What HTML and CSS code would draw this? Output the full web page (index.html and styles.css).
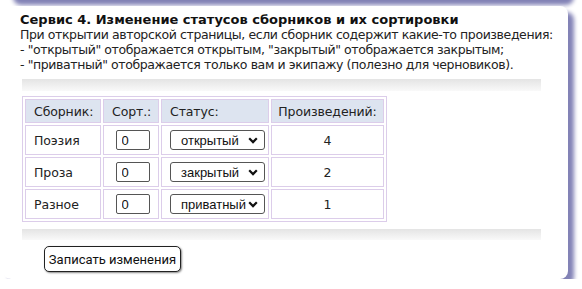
FILE: index.html
```html
<!DOCTYPE html>
<html lang="ru">
<head>
  <meta charset="UTF-8" />
  <title>Сервис 4</title>
  <link rel="stylesheet" href="styles.css">
</head>
<body>
  <div class="page">
    <div class="panel panel-prev"></div>

    <div class="panel">
      <div class="service-title">Сервис 4. Изменение статусов сборников и их сортировки</div>
      <div class="service-text">
        При открытии авторской страницы, если сборник содержит какие-то произведения:<br>
        - "открытый" отображается открытым, "закрытый" отображается закрытым;<br>
        - "приватный" отображается только вам и экипажу (полезно для черновиков).
      </div>

      <div class="shade-bar"></div>

      <table class="books-table">
        <tr>
          <th class="col-name">Сборник:</th>
          <th class="col-sort">Сорт.:</th>
          <th class="col-status">Статус:</th>
          <th class="col-count">Произведений:</th>
        </tr>
        <tr>
          <td>Поэзия</td>
          <td class="center"><input class="sort-input" type="text" value="0"></td>
          <td>
            <span class="select-wrap">
              <select class="status-select">
                <option selected>открытый</option>
                <option>закрытый</option>
                <option>приватный</option>
              </select>
              <svg class="chevron" width="10" height="7" viewBox="0 0 10 7"><path d="M1.2 1.3 L5 5.1 L8.8 1.3" fill="none" stroke="#111" stroke-width="2.2"/></svg>
            </span>
          </td>
          <td class="center">4</td>
        </tr>
        <tr>
          <td>Проза</td>
          <td class="center"><input class="sort-input" type="text" value="0"></td>
          <td>
            <span class="select-wrap">
              <select class="status-select">
                <option>открытый</option>
                <option selected>закрытый</option>
                <option>приватный</option>
              </select>
              <svg class="chevron" width="10" height="7" viewBox="0 0 10 7"><path d="M1.2 1.3 L5 5.1 L8.8 1.3" fill="none" stroke="#111" stroke-width="2.2"/></svg>
            </span>
          </td>
          <td class="center">2</td>
        </tr>
        <tr>
          <td>Разное</td>
          <td class="center"><input class="sort-input" type="text" value="0"></td>
          <td>
            <span class="select-wrap">
              <select class="status-select">
                <option>открытый</option>
                <option>закрытый</option>
                <option selected>приватный</option>
              </select>
              <svg class="chevron" width="10" height="7" viewBox="0 0 10 7"><path d="M1.2 1.3 L5 5.1 L8.8 1.3" fill="none" stroke="#111" stroke-width="2.2"/></svg>
            </span>
          </td>
          <td class="center">1</td>
        </tr>
      </table>

      <div class="shade-bar shade-bottom"></div>

      <button class="save-btn" type="button">Записать изменения</button>
    </div>
  </div>
</body>
</html>
```

FILE: styles.css
```css
html, body {
  margin: 0;
  padding: 0;
  background: #fff;
  overflow: hidden;
}

body {
  font-family: "DejaVu Sans", Verdana, sans-serif;
  font-size: 12.5px;
  letter-spacing: -0.1px;
  color: #222;
}

.page {
  padding-left: 3px;
  width: 565px;
}

/* service panels, stacked one under another */
.panel {
  background: #fff;
  border-radius: 8px;
  box-shadow: 6px 6px 4px #8282b6;
  padding: 6px 12px 7px 17px;
}
.panel-prev {
  height: 20px;
  margin-top: -21px;
  margin-bottom: 7px;
  margin-left: 4px;
  padding: 0;
}

.service-title {
  font-size: 13px;
  letter-spacing: 0;
  font-weight: bold;
  line-height: 15px;
  color: #111;
  white-space: nowrap;
}
.service-text {
  line-height: 15px;
  letter-spacing: -0.4px;
  color: #222;
  white-space: nowrap;
}

.shade-bar {
  height: 12px;
  margin: 7px 15px 5px 2px;
  background: linear-gradient(#e4e4e4, #f9f9f9);
}
.shade-bottom {
  height: 11px;
  margin-top: 7px;
  margin-bottom: 6px;
}

/* collections table */
.books-table {
  margin-left: 2px;
  border: 1px solid #dccdea;
  border-spacing: 2px;
  font-size: 12.5px;
}
.books-table th,
.books-table td {
  border: 1px solid #dccdea;
  padding: 0 0 0 8px;
  text-align: left;
  font-weight: normal;
  color: #222;
}
.books-table th {
  background: #dde4f0;
  height: 22px;
}
.books-table td {
  height: 28px;
}
.books-table .center,
.books-table .col-count {
  text-align: center;
  padding: 0;
}
.col-name { width: 66px; }
.col-sort { width: 46px; }
.col-status { width: 98px; }
.col-count { width: 111px; }

.sort-input {
  box-sizing: border-box;
  width: 34px;
  height: 20px;
  margin: 0 0 0 3px;
  padding: 0 0 0 5px;
  border: 1px solid #555;
  border-radius: 2px;
  font-family: "Liberation Sans", Arial, sans-serif;
  font-size: 13px;
  letter-spacing: 0;
  color: #111;
  vertical-align: middle;
}

.select-wrap {
  position: relative;
  display: inline-block;
  vertical-align: middle;
}
.status-select {
  appearance: none;
  -webkit-appearance: none;
  box-sizing: border-box;
  width: 95px;
  height: 20px;
  padding: 0 0 0 10px;
  border: 1px solid #555;
  border-radius: 3px;
  background: #fff;
  font-family: "Liberation Sans", Arial, sans-serif;
  font-size: 13px;
  letter-spacing: 0;
  color: #111;
  display: block;
}
.chevron {
  position: absolute;
  right: 7px;
  top: 7px;
  pointer-events: none;
}

.save-btn {
  display: block;
  margin-left: 24px;
  width: 137px;
  height: 26px;
  background: #fff;
  border: 1px solid #222;
  border-radius: 5px;
  box-shadow: 1px 1px 2px #888;
  font-family: Roboto, "Liberation Sans", sans-serif;
  font-size: 13px;
  letter-spacing: 0;
  color: #111;
  padding: 0;
}
```
